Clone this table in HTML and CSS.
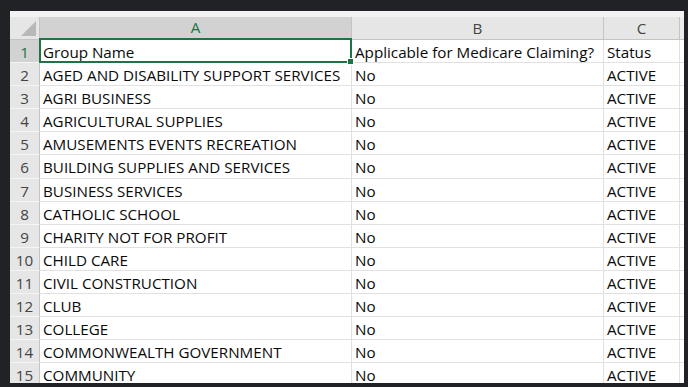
FILE: index.html
```html
<!DOCTYPE html>
<html>
<head>
<meta charset="utf-8">
<link rel="stylesheet" href="styles.css">
</head>
<body>
<div class="sheet">
  <div class="strip"></div>
  <div class="grid">
    <div class="corner"><span class="tri"></span></div>
    <div class="colhead sel">A</div>
    <div class="colhead">B</div>
    <div class="colhead">C</div>
    <div class="colhead fill"></div>

    <div class="rowhead sel">1</div>
    <div class="cell active">Group Name</div>
    <div class="cell">Applicable for Medicare Claiming?</div>
    <div class="cell">Status</div>
    <div class="cell fill"></div>

    <div class="rowhead">2</div>
    <div class="cell">AGED AND DISABILITY SUPPORT SERVICES</div>
    <div class="cell">No</div>
    <div class="cell">ACTIVE</div>
    <div class="cell fill"></div>

    <div class="rowhead">3</div>
    <div class="cell">AGRI BUSINESS</div>
    <div class="cell">No</div>
    <div class="cell">ACTIVE</div>
    <div class="cell fill"></div>

    <div class="rowhead">4</div>
    <div class="cell">AGRICULTURAL SUPPLIES</div>
    <div class="cell">No</div>
    <div class="cell">ACTIVE</div>
    <div class="cell fill"></div>

    <div class="rowhead">5</div>
    <div class="cell">AMUSEMENTS EVENTS RECREATION</div>
    <div class="cell">No</div>
    <div class="cell">ACTIVE</div>
    <div class="cell fill"></div>

    <div class="rowhead">6</div>
    <div class="cell">BUILDING SUPPLIES AND SERVICES</div>
    <div class="cell">No</div>
    <div class="cell">ACTIVE</div>
    <div class="cell fill"></div>

    <div class="rowhead">7</div>
    <div class="cell">BUSINESS SERVICES</div>
    <div class="cell">No</div>
    <div class="cell">ACTIVE</div>
    <div class="cell fill"></div>

    <div class="rowhead">8</div>
    <div class="cell">CATHOLIC SCHOOL</div>
    <div class="cell">No</div>
    <div class="cell">ACTIVE</div>
    <div class="cell fill"></div>

    <div class="rowhead">9</div>
    <div class="cell">CHARITY NOT FOR PROFIT</div>
    <div class="cell">No</div>
    <div class="cell">ACTIVE</div>
    <div class="cell fill"></div>

    <div class="rowhead">10</div>
    <div class="cell">CHILD CARE</div>
    <div class="cell">No</div>
    <div class="cell">ACTIVE</div>
    <div class="cell fill"></div>

    <div class="rowhead">11</div>
    <div class="cell">CIVIL CONSTRUCTION</div>
    <div class="cell">No</div>
    <div class="cell">ACTIVE</div>
    <div class="cell fill"></div>

    <div class="rowhead">12</div>
    <div class="cell">CLUB</div>
    <div class="cell">No</div>
    <div class="cell">ACTIVE</div>
    <div class="cell fill"></div>

    <div class="rowhead">13</div>
    <div class="cell">COLLEGE</div>
    <div class="cell">No</div>
    <div class="cell">ACTIVE</div>
    <div class="cell fill"></div>

    <div class="rowhead">14</div>
    <div class="cell">COMMONWEALTH GOVERNMENT</div>
    <div class="cell">No</div>
    <div class="cell">ACTIVE</div>
    <div class="cell fill"></div>

    <div class="rowhead">15</div>
    <div class="cell">COMMUNITY</div>
    <div class="cell">No</div>
    <div class="cell">ACTIVE</div>
    <div class="cell fill"></div>
  </div>
</div>
</body>
</html>
```

FILE: styles.css
```css
html, body {
  margin: 0;
  padding: 0;
  background: #202225;
  width: 688px;
  height: 387px;
  overflow: hidden;
}

.sheet {
  margin: 11px 0 0 10px;
  width: 674px;
  height: 372px;
  overflow: hidden;
  background: #ffffff;
  font-family: "Open Sans", "Noto Sans", sans-serif;
  font-size: 15.2px;
  color: #0a0a0a;
}

.strip {
  height: 6px;
  background: #f2f2f2;
}

.grid {
  display: grid;
  grid-template-columns: 30px 312px 252px 76px 4px;
  grid-template-rows: 23px;
  grid-auto-rows: 23.1px;
}

.corner {
  position: relative;
  background: #e6e6e6;
  border-right: 1px solid #c4c4c4;
  border-bottom: 1px solid #c4c4c4;
  box-sizing: border-box;
}

.corner .tri {
  position: absolute;
  right: 3px;
  bottom: 3px;
  width: 0;
  height: 0;
  border-left: 15px solid transparent;
  border-bottom: 15px solid #b8b8b8;
}

.colhead {
  box-sizing: border-box;
  background: #e6e6e6;
  border-right: 1px solid #c4c4c4;
  border-bottom: 1px solid #c4c4c4;
  text-align: center;
  line-height: 20px;
  padding-top: 1px;
  color: #444444;
}

.colhead.sel {
  background: #d2d2d2;
  color: #217346;
  border-bottom: 2px solid #217346;
  line-height: 19px;
}

.colhead.fill {
  border-right: none;
  background: #ececec;
}

.rowhead {
  box-sizing: border-box;
  background: #e6e6e6;
  border-right: 1px solid #c4c4c4;
  border-bottom: 1px solid #f4f4f4;
  text-align: center;
  padding-top: 2px;
  line-height: 20px;
  color: #444444;
}

.rowhead.sel {
  background: #d2d2d2;
  color: #217346;
}

.cell {
  box-sizing: border-box;
  border-right: 1px solid #e1e1e1;
  border-bottom: 1px solid #e1e1e1;
  padding: 2px 0 0 3px;
  line-height: 20px;
  white-space: nowrap;
  overflow: hidden;
}

.cell.fill {
  border-right: none;
  padding: 0;
}

.cell.active {
  position: relative;
  overflow: visible;
}

.cell.active::after {
  content: "";
  position: absolute;
  top: -2px;
  left: -1px;
  right: -1px;
  bottom: -1px;
  border: 2px solid #217346;
}

.cell.active::before {
  content: "";
  position: absolute;
  right: -3px;
  bottom: -3px;
  width: 5px;
  height: 5px;
  background: #217346;
  border: 1px solid #ffffff;
  z-index: 2;
}
```
